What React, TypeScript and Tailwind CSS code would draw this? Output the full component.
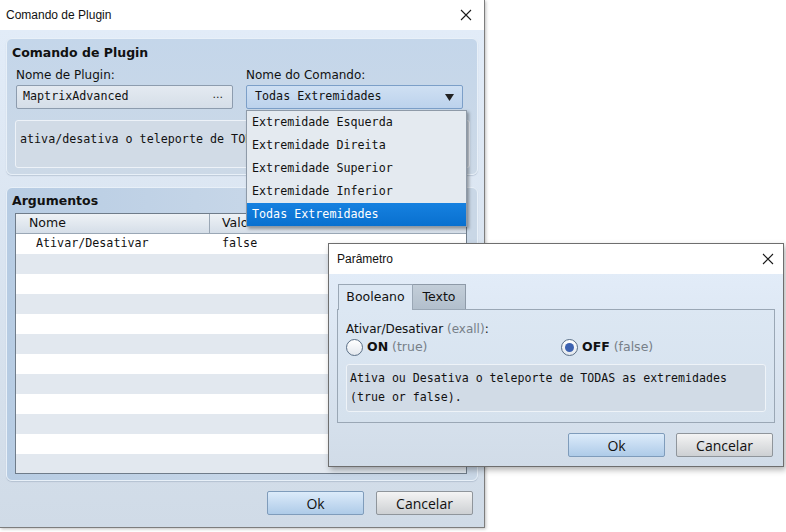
import React from 'react';

const ui = { fontFamily: '"DejaVu Sans", Verdana, sans-serif' };
const mono = { fontFamily: '"DejaVu Sans Mono", "Liberation Mono", monospace' };
const win = { fontFamily: '"Liberation Sans", Arial, sans-serif' };
const btn = { fontFamily: '"Open Sans", "Liberation Sans", sans-serif' };

const CloseX = () => (
  <svg width="12" height="12" viewBox="0 0 12 12" className="text-[#1a1a1a]">
    <path d="M1 1 L11 11 M11 1 L1 11" stroke="currentColor" strokeWidth="1.1" fill="none" />
  </svg>
);

const Button = ({ label, primary }: { label: string; primary?: boolean }) => (
  <button
    style={btn}
    className={
      'w-[97px] h-[24px] rounded-[2px] border text-[14px] text-[#111] flex items-center justify-center ' +
      (primary
        ? 'border-[#7f9cbb] bg-gradient-to-b from-[#dcebfa] to-[#aecbe8]'
        : 'border-[#8f959b] bg-gradient-to-b from-[#f4f4f4] to-[#cdd0d3]')
    }
  >
    {label}
  </button>
);

const Radio = ({ checked }: { checked?: boolean }) => (
  <span className="w-[17px] h-[17px] rounded-full border border-[#5b6f86] bg-gradient-to-b from-[#ffffff] to-[#e3e8ee] flex items-center justify-center">
    {checked && <span className="w-[9px] h-[9px] rounded-full bg-[#3d62b0]" />}
  </span>
);

const rows = Array.from({ length: 12 });

export default function App() {
  return (
    <div className="relative w-[786px] h-[532px] bg-white overflow-hidden" style={ui}>
      {/* janela principal */}
      <div className="w-[485px] h-[528px] flex flex-col border-r border-b border-[#7d7d7d] shadow-[1px_1px_3px_rgba(0,0,0,0.25)]">
        <div className="h-[30px] bg-white flex items-center justify-between pl-[6px] pr-[12px]" style={win}>
          <span className="text-[12px] text-[#111]">Comando de Plugin</span>
          <CloseX />
        </div>
        <div className="flex-1 flex flex-col px-[6px] pt-[8px] bg-gradient-to-b from-[#e2ecf8] to-[#d0dbe7]">
          {/* painel comando */}
          <div className="h-[137px] rounded-[6px] border border-[#e8f0f8] bg-gradient-to-b from-[#c4d6ea] to-[#ccd9e7] pl-[8px] pr-[6px] pt-[6px] shadow-[0_1px_1px_rgba(90,110,140,0.25)]">
            <div className="-ml-[3px] text-[12.5px] font-bold text-[#111] leading-[16px]">Comando de Plugin</div>
            <div className="flex mt-[6px]">
              <div className="w-[231px] pl-[1px]">
                <div className="text-[12px] leading-[16px] text-[#111]">Nome de Plugin:</div>
                <div className="mt-[2px] w-[217px] h-[24px] rounded-[2px] border border-[#8d9cae] bg-gradient-to-b from-[#e4eaf1] to-[#d5dee8] flex items-center justify-between pl-[6px] pr-[9px]">
                  <span className="text-[11.7px] text-[#111]" style={mono}>MaptrixAdvanced</span>
                  <span className="text-[11px] text-[#222] -mt-[3px]">...</span>
                </div>
              </div>
              <div>
                <div className="text-[12px] leading-[16px] text-[#111]">Nome do Comando:</div>
                <div className="mt-[2px] w-[217px] h-[24px] rounded-[2px] border border-[#7c9fc8] bg-gradient-to-b from-[#cfe0f3] to-[#bcd2ec] flex items-center justify-between pl-[8px] pr-[8px]">
                  <span className="text-[11.7px] text-[#111]" style={mono}>Todas Extremidades</span>
                  <svg width="9" height="7" viewBox="0 0 9 7">
                    <path d="M0 0 H9 L4.5 7 Z" fill="#222" />
                  </svg>
                </div>
              </div>
            </div>
            <div className="mt-[11px] h-[48px] w-[455px] rounded-[3px] border border-[#edf2f8] bg-[#d1dbe6] px-[4px] pt-[5px]">
              <span className="text-[11.7px] text-[#111] leading-[16px]" style={mono}>
                ativa/desativa o teleporte de TODAS as extremidades
              </span>
            </div>
          </div>

          {/* painel argumentos */}
          <div className="mt-[12px] h-[294px] rounded-[6px] border border-[#e8f0f8] bg-gradient-to-r from-[#b7cce3] via-[#c6d6e8] to-[#c9d7e6] pl-[8px] pr-[10px] pt-[5px] shadow-[0_1px_1px_rgba(90,110,140,0.25)]">
            <div className="-ml-[3px] text-[12.5px] font-bold text-[#111] leading-[16px]">Argumentos</div>
            <div className="mt-[4px] h-[261px] border border-[#6f7c8a] bg-white overflow-hidden">
              <div className="flex h-[20px] border-b border-[#9aa7b5] bg-gradient-to-b from-[#eef2f6] to-[#d5dee8] text-[12.5px] text-[#111]">
                <div className="w-[194px] border-r border-[#9aa7b5] pl-[13px] flex items-center">Nome</div>
                <div className="pl-[12px] flex items-center">Valor</div>
              </div>
              {rows.map((_, i) => (
                <div
                  key={i}
                  className={'flex h-[20px] items-center text-[11.7px] text-[#111] ' + (i % 2 === 0 ? 'bg-white' : 'bg-[#e2e8ef]')}
                  style={mono}
                >
                  {i === 0 && (
                    <>
                      <span className="w-[194px] pl-[20px]">Ativar/Desativar</span>
                      <span className="pl-[12px]">false</span>
                    </>
                  )}
                </div>
              ))}
            </div>
          </div>

          <div className="mt-[10px] flex justify-end gap-[12px] pr-[5px]">
            <Button label="Ok" primary />
            <Button label="Cancelar" />
          </div>
        </div>
      </div>

      {/* lista suspensa */}
      <div
        className="absolute left-[246px] top-[110px] w-[221px] border border-[#8e9aa8] bg-[#e4eaf0] shadow-[2px_2px_3px_rgba(0,0,0,0.35)]"
        style={mono}
      >
        {['Extremidade Esquerda', 'Extremidade Direita', 'Extremidade Superior', 'Extremidade Inferior', 'Todas Extremidades'].map(
          (t, i) => (
            <div
              key={t}
              className={
                'h-[23px] flex items-center pl-[5px] text-[11.7px] ' +
                (i === 4 ? 'bg-gradient-to-b from-[#1681e0] to-[#0870cf] text-white' : 'text-[#111]')
              }
            >
              {t}
            </div>
          )
        )}
      </div>

      {/* janela parâmetro */}
      <div className="absolute left-[328px] top-[243px] w-[456px] h-[224px] flex flex-col border border-[#6e6e6e] shadow-[2px_3px_6px_rgba(0,0,0,0.3)]">
        <div className="h-[30px] bg-white flex items-center justify-between pl-[8px] pr-[9px]" style={win}>
          <span className="text-[12px] text-[#111]">Parâmetro</span>
          <CloseX />
        </div>
        <div className="flex-1 flex flex-col px-[8px] pt-[9px] bg-gradient-to-b from-[#e2ecf8] to-[#d1dce8]">
          <div className="flex items-end h-[26px] pl-[1px]">
            <div className="h-[26px] w-[75px] border border-b-0 border-[#9aa7b5] bg-[#dce7f3] flex items-center justify-center text-[12.5px] text-[#111] relative top-[1px]">
              Booleano
            </div>
            <div className="h-[25px] w-[53px] border border-l-0 border-b-0 border-[#8e9aa8] bg-gradient-to-b from-[#c3ced9] to-[#b2bfcc] flex items-center justify-center text-[12.5px] text-[#111]">
              Texto
            </div>
          </div>
          <div className="h-[114px] border border-[#9aa7b5] bg-gradient-to-b from-[#dce7f3] to-[#d5e1ed] px-[8px] pt-[11px]">
            <div className="text-[12px] leading-[16px] text-[#111]">
              Ativar/Desativar <span className="text-[#777f88]">(exall)</span>:
            </div>
            <div className="flex items-center h-[18px] mt-[1px]">
              <div className="w-[215px] flex items-center gap-[4px]">
                <Radio />
                <span className="text-[12.5px] text-[#111]">
                  <b>ON</b> <span className="text-[#777f88]">(true)</span>
                </span>
              </div>
              <div className="flex items-center gap-[4px]">
                <Radio checked />
                <span className="text-[12.5px] text-[#111]">
                  <b>OFF</b> <span className="text-[#777f88]">(false)</span>
                </span>
              </div>
            </div>
            <div
              className="mt-[8px] h-[48px] rounded-[3px] border border-[#eef3f8] bg-[#d1dbe6] px-[3px] pt-[4px] text-[11.6px] leading-[19px] text-[#111]"
              style={mono}
            >
              Ativa ou Desativa o teleporte de TODAS as extremidades
              <br />
              (true or false).
            </div>
          </div>
          <div className="mt-[10px] flex justify-end gap-[11px] pr-[2px]">
            <Button label="Ok" primary />
            <Button label="Cancelar" />
          </div>
        </div>
      </div>
    </div>
  );
}
